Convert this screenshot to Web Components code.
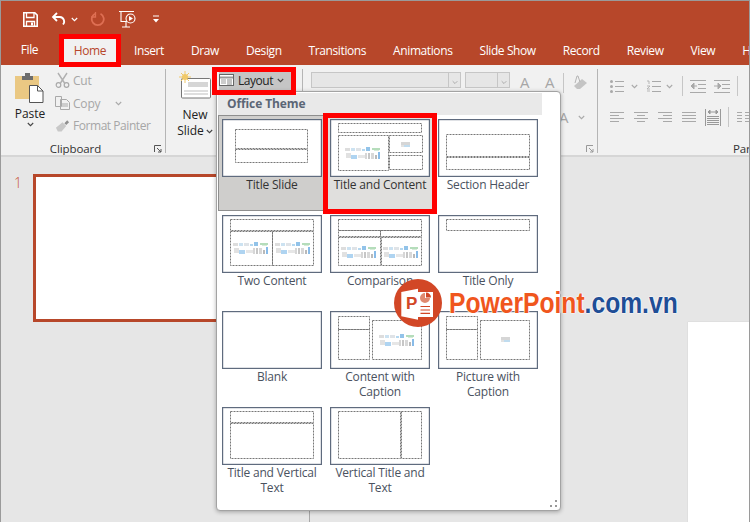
<!DOCTYPE html>
<html>
<head>
<meta charset="utf-8">
<title>PowerPoint Layout</title>
<style>
    html, body { margin: 0; padding: 0; background: #e6e6e6; }
    body { font: 12px "Open Sans", "Liberation Sans", sans-serif; }
</style>
</head>
<body>
<ppt-app></ppt-app>
<script>
const FONT = '"Open Sans", "Liberation Sans", sans-serif';
const chevron = (c, w = 7) => `<svg width="${w}" height="5" viewBox="0 0 7 5"><path d="M.8 1 3.5 3.7 6.2 1" fill="none" stroke="${c}" stroke-width="1.1"/></svg>`;
const lines = (rows, c = '#a9a9a9') => rows.map(r => `<path d="M${r[0]} ${r[2]}.5H${r[1]}" stroke="${c}"/>`).join('');

class PptApp extends HTMLElement {
    constructor() {
        super();
        this.attachShadow({ mode: 'open' });
    }
    connectedCallback() {
        this.shadowRoot.innerHTML = `
        <style>
            :host { display: block; position: relative; width: 750px; height: 522px; overflow: hidden; font: 12px ${FONT}; }
            .frame { display: grid; grid-template-rows: 65px 92px 365px; grid-template-columns: 750px; height: 522px; box-sizing: border-box; }
            .edge { position: absolute; inset: 0; border: 1px solid #9a9a9a; border-bottom: 0; pointer-events: none; }
        </style>
        <div class="frame">
            <ppt-titlebar></ppt-titlebar>
            <ppt-ribbon></ppt-ribbon>
            <ppt-workspace></ppt-workspace>
        </div>
        <layout-menu></layout-menu>
        <ppt-logo></ppt-logo>
        <red-mark x="59" y="34" w="62" h="33"></red-mark>
        <red-mark x="212" y="67" w="84" h="28"></red-mark>
        <red-mark x="323" y="113" w="114" h="101"></red-mark>
        <div class="edge"></div>`;
    }
}

class PptTitlebar extends HTMLElement {
    constructor() {
        super();
        this.attachShadow({ mode: 'open' });
    }
    connectedCallback() {
        const tabs = ['Insert', 'Draw', 'Design', 'Transitions', 'Animations', 'Slide Show', 'Record', 'Review', 'View', 'Help'];
        this.shadowRoot.innerHTML = `
        <style>
            :host { display: flex; flex-direction: column; background: #b7472a; color: #fff; overflow: hidden; }
            .qat { display: flex; align-items: center; height: 38px; padding: 0 0 0 23px; flex: none; }
            .qat svg { display: block; flex: none; }
            .tabs { display: flex; height: 27px; flex: none; white-space: nowrap; font-size: 12px; line-height: 25px; letter-spacing: -.4px; }
            .tabs span { flex: none; }
            .file { width: 59px; text-align: center; line-height: 24px; }
            .tabs .home { width: 62px; text-align: center; color: #b7472a; background: #f1f1f1; }
            .tab { margin-left: 27px; }
            .home + .tab { margin-left: 13px; }
        </style>
        <div class="qat">
            <svg width="15" height="15" viewBox="0 0 15 15"><path d="M.8.8h11l2.400 2.400v11H.8z" fill="none" stroke="#fff" stroke-width="1.600"/><path d="M3.500 1v4.500h7.500V1" fill="none" stroke="#fff" stroke-width="1.300"/><path d="M3.500 14.500v-5h8v5" fill="none" stroke="#fff" stroke-width="1.300"/><rect x="8" y="10.500" width="2" height="3" fill="#fff"/></svg>
            <svg style="margin-left:13px" width="16" height="16" viewBox="0 0 16 16"><path d="M6 2 2 6l4 4" fill="none" stroke="#fff" stroke-width="1.800"/><path d="M2.500 6h6.500a4.500 4.500 0 0 1 3 7.500" fill="none" stroke="#fff" stroke-width="1.800"/></svg>
            <span style="margin-left:4px;display:flex">${chevron('#fff')}</span>
            <svg style="margin-left:12px" width="15" height="16" viewBox="0 0 15 16"><path d="M5 2.800a6 6 0 1 0 5.500 0" fill="none" stroke="#de6f53" stroke-width="1.800"/><path d="M4.500 1v5H0" fill="none" stroke="#de6f53" stroke-width="1.300" transform="translate(1 0)"/></svg>
            <svg style="margin-left:13px" width="19" height="18" viewBox="0 0 19 18"><path d="M1 1.500h15M3 1.500v10h6M8 12v5M4 17h8" fill="none" stroke="#fff" stroke-width="1.100"/><circle cx="12.500" cy="8.500" r="4.500" fill="#b7472a" stroke="#fff" stroke-width="1.100"/><path d="M11 6v5l4-2.500z" fill="#fff"/></svg>
            <svg style="margin-left:15px" width="8" height="8" viewBox="0 0 8 8"><path d="M1 1h6" stroke="#fff" stroke-width="1"/><path d="M1 4h6L4 7.500z" fill="#fff"/></svg>
        </div>
        <div class="tabs">
            <span class="file">File</span>
            <span class="home">Home</span>
            ${tabs.map(t => `<span class="tab">${t}</span>`).join('')}
        </div>`;
    }
}

class RibbonGroup extends HTMLElement {
    constructor() {
        super();
        this.attachShadow({ mode: 'open' });
    }
    connectedCallback() {
        const launcher = this.getAttribute('launcher') !== null;
        this.shadowRoot.innerHTML = `
        <style>
            :host { display: flex; flex-direction: column; box-sizing: border-box; height: 84px; border-right: 1px solid #b5b5b5; flex: none; }
            .body { flex: 1; min-height: 0; }
            .label { display: grid; grid-template-columns: 1fr auto 1fr; grid-template-rows: 8px; height: 8px; align-items: center; color: #333; font-size: 11.5px; line-height: 8px; letter-spacing: -.1px; white-space: nowrap; padding: 0 3px 0 0; }
            .label span { grid-column: 2; margin-right: var(--shift, 0); }
            .label svg { grid-column: 3; justify-self: end; }
        </style>
        <div class="body"><slot></slot></div>
        <div class="label" part="label">
            <span>${this.getAttribute('label') || ''}</span>
            ${launcher ? `<svg width="8" height="8" viewBox="0 0 8 8"><path d="M.5 7V.5H7M3 3l4 4M7 4v3H4" fill="none" stroke="${this.getAttribute('launcher') || '#666'}"/></svg>` : ''}
        </div>`;
    }
}

class PptRibbon extends HTMLElement {
    constructor() {
        super();
        this.attachShadow({ mode: 'open' });
    }
    connectedCallback() {
        const g = '#a9a9a9';
        this.shadowRoot.innerHTML = `
        <style>
            :host { display: flex; box-sizing: border-box; background: #f1f1f1; border-bottom: 2px solid #d6d6d6; padding-top: 4px; color: #333; overflow: hidden; }
            svg { display: block; flex: none; }
            .clip { display: flex; height: 68px; }
            .paste { width: 44px; margin-left: 8px; display: flex; flex-direction: column; align-items: center; }
            .paste span { line-height: 15px; margin-top: 1px; color: #222; }
            .cmds { margin-left: 3px; display: flex; flex-direction: column; }
            .cmd { display: flex; align-items: center; height: 23px; color: #a6a6a6; white-space: nowrap; letter-spacing: -.2px; }
            .cmd b { font-weight: 400; margin-left: 3px; }
            .cmd:last-child b { letter-spacing: -.45px; }
            .cmd svg:first-child { width: 15px; }
            .slides { display: flex; padding-left: 8px; }
            .new { width: 42px; display: flex; flex-direction: column; align-items: center; text-align: center; line-height: 16px; color: #222; }
            .layout { margin: 3px 0 0 3px; width: 72px; height: 18px; background: #c5c5c5; display: flex; align-items: center; gap: 4px; padding-bottom: 2px; box-sizing: border-box; color: #222; letter-spacing: -.45px; }
            .font { padding-left: 8px; }
            .frow { display: flex; align-items: flex-start; height: 34px; }
            .combo { margin-top: 3px; height: 16px; box-sizing: border-box; border: 1px solid #c6c6c6; background: #e6e6e6; display: flex; justify-content: flex-end; }
            .combo i { width: 12px; border-left: 1px solid #c6c6c6; display: flex; align-items: center; justify-content: center; padding-top: 5px; box-sizing: border-box; }
            .ga { color: #a6a6a6; font-size: 15px; line-height: 14px; position: relative; width: 11px; }
            .vsep { width: 1px; background: #c6c6c6; height: 20px; flex: none; }
            .para { padding: 7px 0 0 12px; }
            .prow { display: flex; align-items: center; height: 20px; }
            .plabel::part(label) { display: block; padding-left: 135px; }
        </style>
        <ribbon-group label="Clipboard" launcher="#555" style="width:166px;--shift:11px">
            <div class="clip">
                <div class="paste">
                    <svg width="30" height="31" viewBox="0 0 30 31" style="margin-top:3px"><rect x="0" y="4" width="24" height="23" fill="#eac883"/><path d="M7 4h3V1h5v3h3v4H7z" fill="#6d6d6d"/><path d="M14.500 13.500h8l5.500 5.500v11.500H14.500z" fill="#fff" stroke="#555"/><path d="M22.500 13.500V19H28" fill="none" stroke="#555"/></svg>
                    <span style="margin-top:3px">Paste</span>
                    <span style="margin-top:1px;height:8px">${chevron('#444')}</span>
                </div>
                <div class="cmds">
                    <div class="cmd"><svg width="15" height="16" viewBox="0 0 15 16"><path d="M3 1l6.500 10M12 1 5.500 11" stroke="#b0b0b0" stroke-width="1.400"/><circle cx="3.500" cy="13" r="2.300" fill="none" stroke="${g}" stroke-width="1.200"/><circle cx="11.500" cy="13" r="2.300" fill="none" stroke="${g}" stroke-width="1.200"/></svg><b>Cut</b></div>
                    <div class="cmd"><svg width="15" height="14" viewBox="0 0 15 14"><path d="M.5.500h6v10h-6zM5.500 3.500h6l3 3v7h-9z" fill="#f1f1f1" stroke="${g}"/><path d="M7 8h6M7 10h6" stroke="${g}"/></svg><b>Copy</b><span style="margin-left:11px;display:flex">${chevron(g)}</span></div>
                    <div class="cmd"><svg width="16" height="15" viewBox="0 0 16 15"><path d="M1 10 8 4l4 4-5 6H3z" fill="#c8c8c8"/><path d="M10 5l3-3 2 2-3 3z" fill="#8f8f8f"/></svg><b>Format Painter</b></div>
                </div>
            </div>
        </ribbon-group>
        <ribbon-group style="width:137px">
            <div class="slides">
                <div class="new">
                    <svg width="32" height="28" viewBox="0 0 32 28" style="margin-top:2px"><rect x="2.500" y="7.500" width="29" height="19.500" rx="1" fill="#fff" stroke="#777"/><rect x="9" y="11" width="20" height="5" fill="#d6d6d6"/><path d="M5 20h24M5 23h24" stroke="#bdbdbd"/><circle cx="6" cy="6" r="3" fill="#f0c96a"/><path d="M6 0v12M0 6h12M2 2l8 8M10 2l-8 8" stroke="#f0c96a"/></svg>
                    <span style="margin-top:8px">New</span>
                    <span style="display:flex;align-items:center;gap:2px">Slide ${chevron('#444')}</span>
                </div>
                <div>
                    <div class="layout"><svg width="15" height="12" viewBox="0 0 15 12"><rect x=".5" y=".5" width="14" height="11" fill="#fff" stroke="#666"/><path d="M1 3.500h13" stroke="#999" stroke-width="2"/><rect x="2" y="5" width="5" height="5" fill="#ccc"/><path d="M8 6h5M8 8h5M8 10h5" stroke="#888"/></svg>Layout ${chevron('#444')}</div>
                </div>
            </div>
        </ribbon-group>
        <ribbon-group launcher="#999" label=" " style="width:295px">
            <div class="font">
                <div class="frow">
                    <div class="combo" style="width:150px"><i>${chevron(g, 6)}</i></div>
                    <div class="combo" style="width:45px;margin-left:4px"><i>${chevron(g, 6)}</i></div>
                    <span class="ga" style="margin:6px 0 0 10px">A</span>
                    <span class="ga" style="margin:6px 0 0 14px">A</span>
                    <span class="vsep" style="margin:4px 8px 0 7px"></span>
                    <svg width="16" height="16" viewBox="0 0 16 16" style="margin-top:6px"><path d="M2 11 10 4l5 4-7 6H5z" fill="#c4c4c4"/><path d="M3 8 5 1h1l2 6" fill="none" stroke="#b5b5b5"/></svg>
                </div>
                <div class="frow" style="justify-content:flex-end;padding-right:12px;align-items:center;height:28px;gap:8px">
                    <span class="ga">A</span><span style="display:flex">${chevron(g)}</span>
                </div>
            </div>
        </ribbon-group>
        <ribbon-group class="plabel" label="Paragraph" style="width:152px;border:0">
            <div class="para">
                <div class="prow">
                    <svg width="14" height="13" viewBox="0 0 14 13"><circle cx="1.500" cy="1.500" r="1.500" fill="${g}"/><circle cx="1.500" cy="6.500" r="1.500" fill="${g}"/><circle cx="1.500" cy="11.500" r="1.500" fill="${g}"/>${lines([[5, 14, 1], [5, 14, 6], [5, 14, 11]])}</svg>
                    <span style="margin-left:7px;display:flex">${chevron(g)}</span>
                    <svg style="margin-left:8px" width="15" height="13" viewBox="0 0 15 13"><path d="M1 1h2v3M1 6h3L1 9h3M1 11h3" fill="none" stroke="${g}" stroke-width=".8"/>${lines([[6, 15, 1], [6, 15, 6], [6, 15, 11]])}</svg>
                    <span style="margin-left:5px;display:flex">${chevron(g)}</span>
                    <span class="vsep" style="margin:0 7px 0 9px"></span>
                    <svg width="16" height="13" viewBox="0 0 16 13">${lines([[0, 16, 0], [8, 16, 4], [8, 16, 8], [0, 16, 12]])}<path d="M1 6h6M1 6l3-3v6z" fill="${g}" stroke="${g}"/></svg>
                    <svg style="margin-left:8px" width="16" height="13" viewBox="0 0 16 13">${lines([[0, 16, 0], [8, 16, 4], [8, 16, 8], [0, 16, 12]])}<path d="M0 6h5M7 6 4 3v6z" fill="${g}" stroke="${g}"/></svg>
                    <span class="vsep" style="margin:0 0 0 7px"></span>
                </div>
                <div class="prow" style="margin-top:11px">
                    <svg width="14" height="11" viewBox="0 0 14 11">${lines([[0, 14, 0], [0, 9, 3], [0, 14, 6], [0, 9, 9]])}</svg>
                    <svg style="margin-left:10px" width="14" height="11" viewBox="0 0 14 11">${lines([[0, 14, 0], [3, 11, 3], [0, 14, 6], [3, 11, 9]])}</svg>
                    <svg style="margin-left:10px" width="14" height="11" viewBox="0 0 14 11">${lines([[0, 14, 0], [5, 14, 3], [0, 14, 6], [5, 14, 9]])}</svg>
                    <svg style="margin-left:10px" width="14" height="11" viewBox="0 0 14 11">${lines([[0, 14, 0], [0, 14, 3], [0, 14, 6], [0, 14, 9]])}</svg>
                    <svg style="margin-left:9px" width="16" height="17" viewBox="0 0 16 17"><path d="M.5 0v17M15.500 0v17" stroke="#999"/>${lines([[2, 14, 7], [2, 14, 9], [2, 14, 11], [2, 14, 13], [2, 14, 15]], '#999')}<path d="M3 3h10M3 3l2-2v4zM13 3l-2-2v4z" stroke="#999" fill="#999"/></svg>
                    <span class="vsep" style="margin:0 8px 0 7px"></span>
                    <svg width="13" height="11" viewBox="0 0 13 11">${lines([[0, 5, 0], [8, 13, 0], [0, 5, 3], [8, 13, 3], [0, 5, 6], [8, 13, 6], [0, 5, 9], [8, 13, 9]])}</svg>
                </div>
            </div>
        </ribbon-group>`;
    }
}

class PptWorkspace extends HTMLElement {
    constructor() {
        super();
        this.attachShadow({ mode: 'open' });
    }
    connectedCallback() {
        this.shadowRoot.innerHTML = `
        <style>
            :host { display: flex; background: #e6e6e6; overflow: hidden; }
            .pane { width: 310px; box-sizing: border-box; border-right: 1px solid #a8a8a8; display: flex; padding: 17px 0 0 14px; align-items: flex-start; flex: none; }
            .num { width: 19px; color: #c8553a; font-size: 14px; line-height: 17px; font-weight: 300; }
            .thumb { width: 261px; height: 148px; box-sizing: border-box; background: #fff; border: 3px solid #b7472a; }
            .main { flex: 1; padding: 165px 0 0 378px; }
            .page { height: 200px; background: #fff; box-shadow: 0 0 1px #bbb; }
        </style>
        <div class="pane">
            <span class="num">1</span>
            <div class="thumb"></div>
        </div>
        <div class="main"><div class="page"></div></div>`;
    }
}

const ph = (x1, y1, x2, y2) => `<rect x="${x1 + .5}" y="${y1 + .5}" width="${x2 - x1}" height="${y2 - y1}" fill="none" stroke="#777" stroke-dasharray="2 1"/>`;
// composite content-placeholder picture, 36x12 at its origin
const bigIcon = (x, y) => `<g transform="translate(${x} ${y})" opacity=".85">
    <rect x="0" y="1" width="5" height="3" fill="#d8d8d8"/><rect x="6" y="1" width="4" height="3" fill="#c4ddef"/><rect x="11" y="1" width="5" height="3" fill="#dadfe3"/><rect x="17" y="2" width="3" height="2" fill="#a9d2ee"/><rect x="21" y="0" width="4" height="4" fill="#7fb9e6"/><rect x="27" y="1" width="8" height="2" fill="#a9d8b0"/><rect x="29" y="3" width="5" height="1" fill="#cfe8d2"/>
    <rect x="1" y="6" width="5" height="5" fill="#dcdcdc"/><rect x="6" y="8" width="6" height="4" fill="#a2cdef"/><rect x="13" y="8" width="7" height="3" fill="#e2e2e2"/><rect x="20" y="6" width="2" height="6" fill="#cfcfcf"/><rect x="23" y="6" width="2" height="6" fill="#bdbdbd"/><rect x="26" y="6" width="3" height="6" fill="#d2d2d2"/><rect x="30" y="8" width="2" height="4" fill="#adadad"/><rect x="33" y="5" width="2" height="7" fill="#74b0e4"/>
</g>`;
const smallIcon = (x, y) => `<g transform="translate(${x} ${y})"><rect x="0" y="0" width="9" height="3" fill="#d6d6d6"/><rect x="3" y="3" width="6" height="2" fill="#c0dcef"/><rect x="0" y="3" width="3" height="2" fill="#e2e2e2"/></g>`;
const LAYOUTS = {
    title: () => ph(13, 10, 85, 29) + ph(13, 30, 85, 43),
    content: () => ph(8, 4, 91, 13) + ph(8, 16, 58, 51) + ph(59, 16, 92, 33) + ph(59, 36, 92, 50) + bigIcon(15, 28) + smallIcon(71, 23),
    section: () => ph(8, 15, 91, 37) + ph(8, 38, 91, 50),
    two: () => ph(8, 4, 91, 15) + ph(8, 16, 50, 50) + ph(50, 16, 91, 50) + bigIcon(11, 27) + bigIcon(53, 27),
    comparison: () => ph(8, 4, 91, 15) + ph(8, 15, 50, 21) + ph(50, 15, 91, 21) + ph(8, 22, 50, 50) + ph(51, 22, 91, 50) + bigIcon(11, 31) + bigIcon(53, 31),
    titleonly: () => ph(8, 4, 91, 15),
    blank: () => '',
    ccaption: () => ph(8, 5, 39, 18) + ph(8, 18, 39, 48) + ph(42, 9, 91, 48) + bigIcon(49, 23),
    pcaption: () => ph(8, 5, 39, 18) + ph(8, 18, 39, 48) + ph(42, 9, 91, 48) + smallIcon(63, 26),
    vtext: () => ph(8, 4, 91, 15) + ph(8, 16, 91, 51),
    vtitle: () => ph(8, 4, 70, 51) + ph(71, 4, 91, 51)
};

class LayoutItem extends HTMLElement {
    constructor() {
        super();
        this.attachShadow({ mode: 'open' });
    }
    connectedCallback() {
        const draw = LAYOUTS[this.getAttribute('kind')];
        this.shadowRoot.innerHTML = `
        <style>
            :host { display: block; box-sizing: border-box; padding: 4px 4px 0 4px; height: 96px; text-align: center; color: #4a5260; font-size: 12px; line-height: 15px; letter-spacing: -.2px; }
            :host([state="selected"]) { background: #cfcecc; outline: 1px solid #8e8e8e; outline-offset: -1px; color: #333; }
            :host([state="hover"]) { background: #e0dfdd; color: #333; }
            svg { display: block; background: #fff; }
        </style>
        <svg width="100" height="58" viewBox="0 0 100 58"><rect x=".6" y=".6" width="98.800" height="56.800" fill="#fff" stroke="#5f6b7e" stroke-width="1.200"/>${draw()}</svg>
        <div><slot></slot></div>`;
    }
}

class LayoutMenu extends HTMLElement {
    constructor() {
        super();
        this.attachShadow({ mode: 'open' });
    }
    connectedCallback() {
        this.shadowRoot.innerHTML = `
        <style>
            :host { position: absolute; left: 216px; top: 91px; width: 345px; height: 420px; box-sizing: border-box; background: #fff; border: 1px solid #a3a3a3; border-radius: 4px; box-shadow: 0 1px 4px rgba(0,0,0,.3); padding: 1px 18px 0 1px; display: flex; flex-direction: column; }
            .head { height: 22px; line-height: 22px; background: #e9e9e9; color: #5b6676; font-weight: 700; font-size: 12px; padding-left: 9px; letter-spacing: -.1px; flex: none; }
            .grid { display: grid; grid-template-columns: repeat(3, 108px); grid-auto-rows: 96px; }
            .grip { position: absolute; right: 3px; bottom: 3px; display: block; }
        </style>
        <div class="head">Office Theme</div>
        <div class="grid">
            <layout-item kind="title" state="selected">Title Slide</layout-item>
            <layout-item kind="content" state="hover">Title and Content</layout-item>
            <layout-item kind="section">Section Header</layout-item>
            <layout-item kind="two">Two Content</layout-item>
            <layout-item kind="comparison">Comparison</layout-item>
            <layout-item kind="titleonly">Title Only</layout-item>
            <layout-item kind="blank">Blank</layout-item>
            <layout-item kind="ccaption">Content with Caption</layout-item>
            <layout-item kind="pcaption">Picture with Caption</layout-item>
            <layout-item kind="vtext">Title and Vertical Text</layout-item>
            <layout-item kind="vtitle">Vertical Title and Text</layout-item>
        </div>
        <svg class="grip" width="7" height="7" viewBox="0 0 7 7" fill="#999"><rect x="5" y="0" width="2" height="2"/><rect x="0" y="5" width="2" height="2"/><rect x="5" y="5" width="2" height="2"/></svg>`;
    }
}

class RedMark extends HTMLElement {
    constructor() {
        super();
        this.attachShadow({ mode: 'open' });
    }
    connectedCallback() {
        const a = n => this.getAttribute(n) + 'px';
        this.shadowRoot.innerHTML = `
        <style>
            :host { position: absolute; left: ${a('x')}; top: ${a('y')}; width: ${a('w')}; height: ${a('h')}; box-sizing: border-box; border: 5px solid #ff0000; pointer-events: none; }
        </style>`;
    }
}

class PptLogo extends HTMLElement {
    constructor() {
        super();
        this.attachShadow({ mode: 'open' });
    }
    connectedCallback() {
        this.shadowRoot.innerHTML = `
        <style>
            :host { position: absolute; left: 394px; top: 279px; display: flex; align-items: center; height: 48px; white-space: nowrap; }
            svg { display: block; flex: none; }
            .word { margin-left: 7px; font: 700 29px/48px "Liberation Sans", sans-serif; transform: scaleX(.85); transform-origin: left center; color: #f0561d; text-shadow: 0 0 2px #fff, 0 0 2px #fff, 0 0 1px #fff; }
            .word span { color: #1f4e96; }
        </style>
        <svg width="48" height="48" viewBox="0 0 48 48">
            <circle cx="24" cy="24" r="24" fill="#d24726"/>
            <path d="M24 13h15v25H24z" fill="#fff"/>
            <path d="M7.300 13 24 9.700v31L7.300 37.300z" fill="#fff"/>
            <path d="M31 14a5 5 0 1 0 5 5h-5z" fill="#e08a70"/>
            <path d="M32 13.500a5 5 0 0 1 5 5h-5z" fill="#d24726"/>
            <path d="M26.500 27.500H36M26.500 31H36M26.500 34.300H36" stroke="#d24726" stroke-width="1.200"/>
            <text x="12" y="30" font-family="Liberation Sans" font-weight="700" font-size="17" fill="#d24726">P</text>
        </svg>
        <div class="word">PowerPoint<span>.com.vn</span></div>`;
    }
}

customElements.define('ppt-app', PptApp);
customElements.define('ppt-titlebar', PptTitlebar);
customElements.define('ribbon-group', RibbonGroup);
customElements.define('ppt-ribbon', PptRibbon);
customElements.define('ppt-workspace', PptWorkspace);
customElements.define('layout-item', LayoutItem);
customElements.define('layout-menu', LayoutMenu);
customElements.define('red-mark', RedMark);
customElements.define('ppt-logo', PptLogo);
</script>
</body>
</html>
